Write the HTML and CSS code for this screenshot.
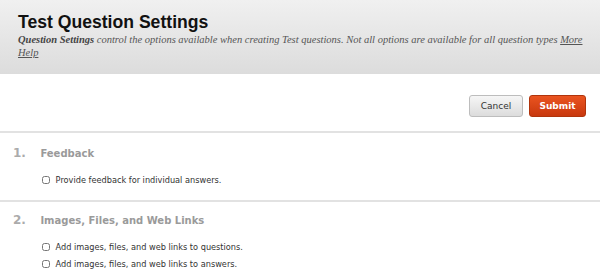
FILE: index.html
```html
<!DOCTYPE html>
<html lang="en">
<head>
  <meta charset="UTF-8" />
  <title>Test Question Settings</title>
  <link rel="stylesheet" href="styles.css">
</head>
<body>
  <header class="page-title">
    <h1>Test Question Settings</h1>
    <p><strong>Question Settings</strong> control the options available when creating Test questions. Not all options are available for all question types <a href="#">More Help</a></p>
  </header>

  <div class="actions">
    <button class="btn btn-cancel">Cancel</button>
    <button class="btn btn-submit">Submit</button>
  </div>

  <section class="step">
    <h2><span class="num">1.</span> Feedback</h2>
    <ul class="options">
      <li><label><input type="checkbox"> Provide feedback for individual answers.</label></li>
    </ul>
  </section>

  <section class="step">
    <h2><span class="num">2.</span> Images, Files, and Web Links</h2>
    <ul class="options">
      <li><label><input type="checkbox"> Add images, files, and web links to questions.</label></li>
      <li><label><input type="checkbox"> Add images, files, and web links to answers.</label></li>
    </ul>
  </section>
</body>
</html>
```

FILE: styles.css
```css
body {
  margin: 0;
  font-family: "DejaVu Sans", Verdana, sans-serif;
  background-color: #ffffff;
  color: #333;
}
.page-title {
  height: 74px;
  box-sizing: border-box;
  padding: 11px 10px 0 18px;
  background: linear-gradient(#f0f0f0, #dcdcdc);
}
.page-title h1 {
  margin: 0;
  font-family: "Liberation Sans", Arial, sans-serif;
  font-size: 17.6px;
  line-height: 22px;
  font-weight: bold;
  color: #111;
}
.page-title p {
  margin: 0;
  font-family: "Liberation Serif", Georgia, serif;
  font-style: italic;
  font-size: 10.5px;
  line-height: 13px;
  color: #555;
}
.page-title p strong {
  color: #444;
}
.page-title a {
  color: #555;
}

.actions {
  display: flex;
  justify-content: flex-end;
  gap: 6px;
  padding: 21px 14px 14px 0;
  border-bottom: 2px solid #e2e2e2;
}
.btn {
  height: 22px;
  padding: 0;
  border: 1px solid #bdbdbd;
  border-radius: 3px;
  background: linear-gradient(#f6f6f6, #dcdcdc);
  font-family: "DejaVu Sans", sans-serif;
  font-size: 9px;
  color: #333;
}
.btn-cancel {
  width: 54px;
}
.btn-submit {
  width: 57px;
  border-color: #b0340c;
  background: linear-gradient(#ea5420, #c8380e);
  color: #fff;
  font-weight: bold;
}

.step {
  padding: 10px 0 11px 0;
  border-bottom: 2px solid #e2e2e2;
}
.step:last-child {
  border-bottom: none;
  padding-top: 8px;
}
.step h2 {
  margin: 0;
  padding-left: 13px;
  font-size: 10px;
  line-height: 20px;
  font-weight: bold;
  color: #9a9a9a;
}
.step h2 .num {
  font-size: 12px;
  color: #ababab;
  margin-right: 11px;
}
.options {
  list-style: none;
  margin: 8px 0 0 0;
  padding: 0 0 0 42px;
}
.options li {
  font-size: 8.2px;
  line-height: 17px;
}
.options input {
  width: 8px;
  height: 8px;
  margin: 0 3px 0 0;
  vertical-align: -1px;
}
```
